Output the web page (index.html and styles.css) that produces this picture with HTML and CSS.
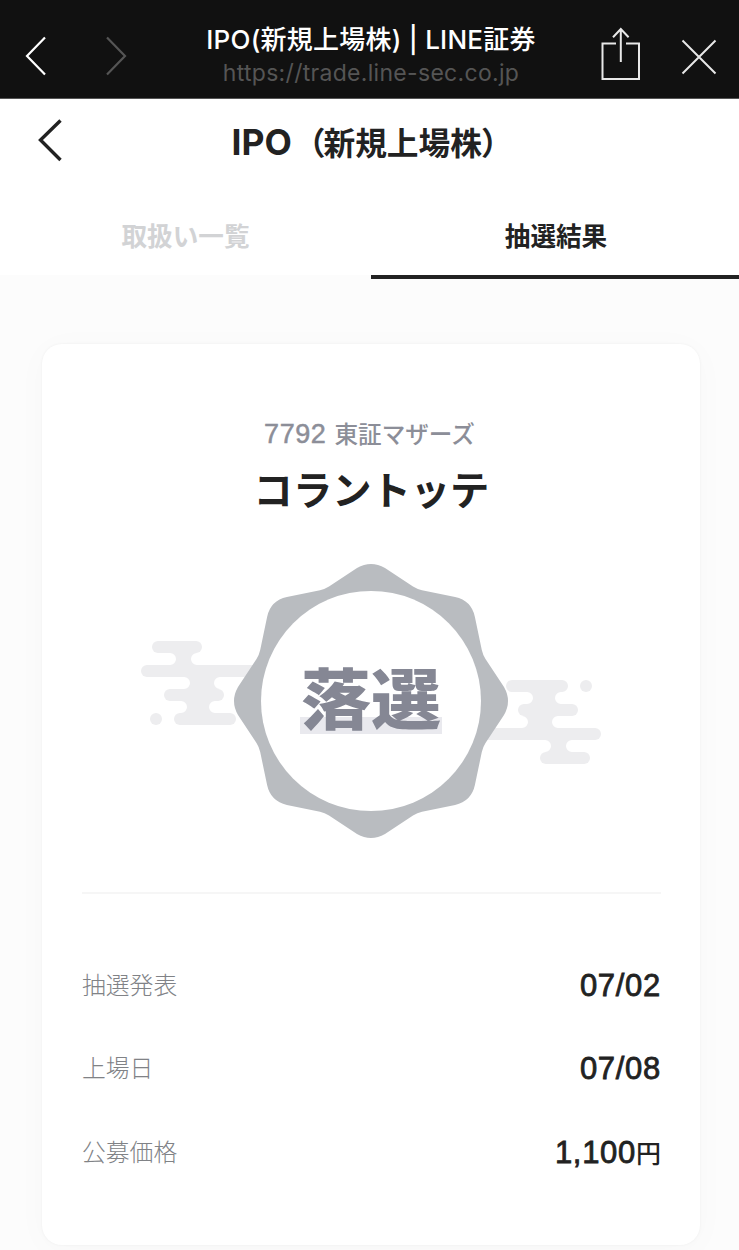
FILE: index.html
```html
<!DOCTYPE html>
<html lang="ja">
<head>
  <meta charset="UTF-8" />
  <meta name="viewport" content="width=device-width, initial-scale=1.0"/>
  <title>IPO(新規上場株) | LINE証券</title>
  <link rel="stylesheet" href="styles.css">
</head>
<body>

  <header class="browser-bar">
    <div class="browser-nav">
      <svg class="chevron" viewBox="0 0 22 40"><path d="M20 1.5 L2 20 L20 38.5" /></svg>
      <svg class="chevron disabled" viewBox="0 0 22 40"><path d="M2 1.5 L20 20 L2 38.5" /></svg>
    </div>
    <div class="browser-page">
      <div class="page-name">IPO(新規上場株) | LINE証券</div>
      <div class="page-url">https://trade.line-sec.co.jp</div>
    </div>
    <div class="browser-actions">
      <svg class="share" viewBox="0 0 40 54">
        <path d="M15 16.5 H1.5 V52 H38 V16.5 H25" />
        <path d="M19.8 35 V2 M12 10.3 L19.8 2 L27.6 10.3" />
      </svg>
      <svg class="close" viewBox="0 0 36 36"><path d="M1.5 1.5 L34.5 34.5 M34.5 1.5 L1.5 34.5" /></svg>
    </div>
  </header>

  <div class="app-header">
    <svg class="back" viewBox="0 0 26 44"><path d="M23.5 2.5 L3.5 22 L23.5 42" /></svg>
    <h1><span class="latin">IPO</span><span class="paren-open">（</span>新規上場株<span class="paren-close">）</span></h1>
  </div>

  <nav class="tabs">
    <a class="tab">取扱い一覧</a>
    <a class="tab active">抽選結果</a>
  </nav>

  <main class="card">
    <div class="stock-code"><span class="num">7792</span> 東証マザーズ</div>
    <h2>コラントッテ</h2>

    <svg class="stamp" viewBox="-231 -138 462 276">
      <g id="cloud" class="cloud">
        <rect x="-219" y="-60" width="50" height="12" rx="6" />
        <path d="M-201 -48 a6 6 0 0 1 0 12 H-174 a6 6 0 0 1 0 -12 Z" />
        <rect x="-230" y="-36" width="130" height="12" rx="6" />
        <path d="M-187 -24 a6 6 0 0 1 0 12 H-151 a6 6 0 0 1 0 -12 Z" />
        <rect x="-207" y="-12" width="60" height="12" rx="6" />
        <path d="M-190 0 a6 6 0 0 1 0 12 H-156 a6 6 0 0 1 0 -12 Z" />
        <rect x="-197" y="12" width="62" height="12" rx="6" />
        <circle cx="-215" cy="18" r="6" />
      </g>
      <use href="#cloud" transform="rotate(180 0 1.5)" />
      <path class="badge" d="M-14 -133 Q0 -141 14 -133 L42 -114.5 Q46.3 -111.8 51 -110.8 L84.1 -103.9
        Q100.4 -100.4 103.9 -84.1 L110.8 -51 Q111.8 -46.3 114.5 -42 L133 -14
        Q141 0 133 14 L114.5 42 Q111.8 46.3 110.8 51 L103.9 84.1
        Q100.4 100.4 84.1 103.9 L51 110.8 Q46.3 111.8 42 114.5 L14 133
        Q0 141 -14 133 L-42 114.5 Q-46.3 111.8 -51 110.8 L-84.1 103.9
        Q-100.4 100.4 -103.9 84.1 L-110.8 51 Q-111.8 46.3 -114.5 42 L-133 14
        Q-141 0 -133 -14 L-114.5 -42 Q-111.8 -46.3 -110.8 -51 L-103.9 -84.1
        Q-100.4 -100.4 -84.1 -103.9 L-51 -110.8 Q-46.3 -111.8 -42 -114.5 Z" />
      <circle class="badge-inner" r="110" />
      <rect class="marker" x="-71" y="16" width="142" height="17" />
      <text class="result" transform="translate(0 22.5) scale(1 0.94)" text-anchor="middle">落選</text>
    </svg>

    <dl class="details">
      <div class="row">
        <dt>抽選発表</dt>
        <dd>07/02</dd>
      </div>
      <div class="row">
        <dt>上場日</dt>
        <dd>07/08</dd>
      </div>
      <div class="row">
        <dt>公募価格</dt>
        <dd>1,100<span class="yen">円</span></dd>
      </div>
    </dl>
  </main>

</body>
</html>
```
FILE: styles.css
```css
* {
  box-sizing: border-box;
}

body {
  margin: 0;
  height: 1250px;
  overflow: hidden;
  font-family: Inter, 'Noto Sans CJK JP', sans-serif;
  background-color: #fcfcfc;
  color: #222;
}

svg {
  display: block;
  fill: none;
}

h1, h2, dl, dd {
  margin: 0;
}

/* browser bar */
.browser-bar {
  display: grid;
  grid-template-columns: 180px 1fr 177px;
  height: 99px;
  background-color: #111;
  border-bottom: 1px solid #555;
}

.browser-nav {
  display: flex;
  gap: 58px;
  padding: 36px 0 0 25px;
}

.chevron {
  width: 22px;
  height: 40px;
  stroke: #fff;
  stroke-width: 2.2;
}

.chevron.disabled {
  stroke: #555;
}

.browser-page {
  padding-top: 20px;
  text-align: center;
  white-space: nowrap;
}

.page-name {
  color: #fff;
  font-size: 26px;
  font-weight: 500;
  letter-spacing: 0.25px;
  line-height: 39px;
}

.page-url {
  color: #555;
  font-size: 23px;
  letter-spacing: 0.3px;
  line-height: 29px;
}

.browser-actions {
  display: flex;
  gap: 40px;
  padding: 27px 0 0 39px;
}

.browser-actions svg {
  stroke: #e8e8e8;
  stroke-width: 2;
}

.share {
  width: 40px;
  height: 54px;
}

.close {
  width: 36px;
  height: 36px;
  margin-top: 12px;
}

/* app header */
.app-header {
  display: grid;
  grid-template-columns: 100px 1fr 94px;
  height: 97px;
  padding-top: 19px;
  background-color: #fff;
}

.back {
  width: 26px;
  height: 44px;
  margin-left: 37px;
  stroke: #222;
  stroke-width: 3.4;
}

h1 {
  font-size: 31.7px;
  font-weight: 700;
  line-height: 50px;
  text-align: center;
  white-space: nowrap;
}

.latin {
  font-size: 35.5px;
}

.paren-open {
  margin: 0 -2px 0 2px;
}

.paren-close {
  margin: 0 1px 0 -1px;
}

.tabs {
  display: grid;
  grid-template-columns: 371px 1fr;
  height: 83px;
  background: linear-gradient(#fff 79px, #fcfcfc 79px);
}

.tab {
  font-size: 25.6px;
  font-weight: 700;
  line-height: 81px;
  text-align: center;
  color: #d2d3d5;
}

.tab.active {
  padding-left: 2px;
  height: 83px;
  color: #222;
  border-bottom: 4px solid #222;
}

/* result card */
.card {
  width: 658px;
  height: 901px;
  margin: 65px 0 0 42px;
  padding: 70px 39px 0 40px;
  background-color: #fff;
  border-radius: 20px;
  box-shadow: 0 0 3px rgba(0, 0, 0, 0.05), 0 4px 34px rgba(0, 0, 0, 0.025);
}

.stock-code {
  padding-right: 4px;
  color: #8c8e98;
  font-size: 23.6px;
  font-weight: 500;
  line-height: 40px;
  text-align: center;
}

.num {
  margin-right: 2px;
  font-family: 'Liberation Sans', sans-serif;
  font-size: 27px;
  letter-spacing: 0.5px;
  -webkit-text-stroke: 0.5px currentColor;
}

h2 {
  font-size: 39.3px;
  font-weight: 700;
  line-height: 60px;
  margin-top: 6px;
  text-align: center;
}

.stamp {
  width: 462px;
  height: 276px;
  margin: 42px 0 0 58px;
}

.cloud {
  fill: #ededef;
}

.badge {
  fill: #b9bcc0;
}

.badge-inner {
  fill: #fff;
}

.marker {
  fill: #e9e9ee;
}

.result {
  fill: #858794;
  font-size: 70px;
  font-weight: 900;
}

.details {
  margin-top: 53px;
  padding-top: 50px;
  border-top: 2px solid #f6f6f6;
}

.row {
  display: flex;
  justify-content: space-between;
  align-items: center;
  height: 83.5px;
}

dt {
  padding-bottom: 5px;
  color: #808286;
  font-size: 23.8px;
  font-weight: 300;
}

dd {
  font-family: 'Liberation Sans', 'Noto Sans CJK JP', sans-serif;
  font-size: 31px;
  line-height: 36px;
  letter-spacing: 0.7px;
  -webkit-text-stroke: 0.8px currentColor;
}

.yen {
  font-size: 25px;
  font-weight: 500;
  line-height: 1;
  letter-spacing: 0;
  -webkit-text-stroke: 0;
}
```
